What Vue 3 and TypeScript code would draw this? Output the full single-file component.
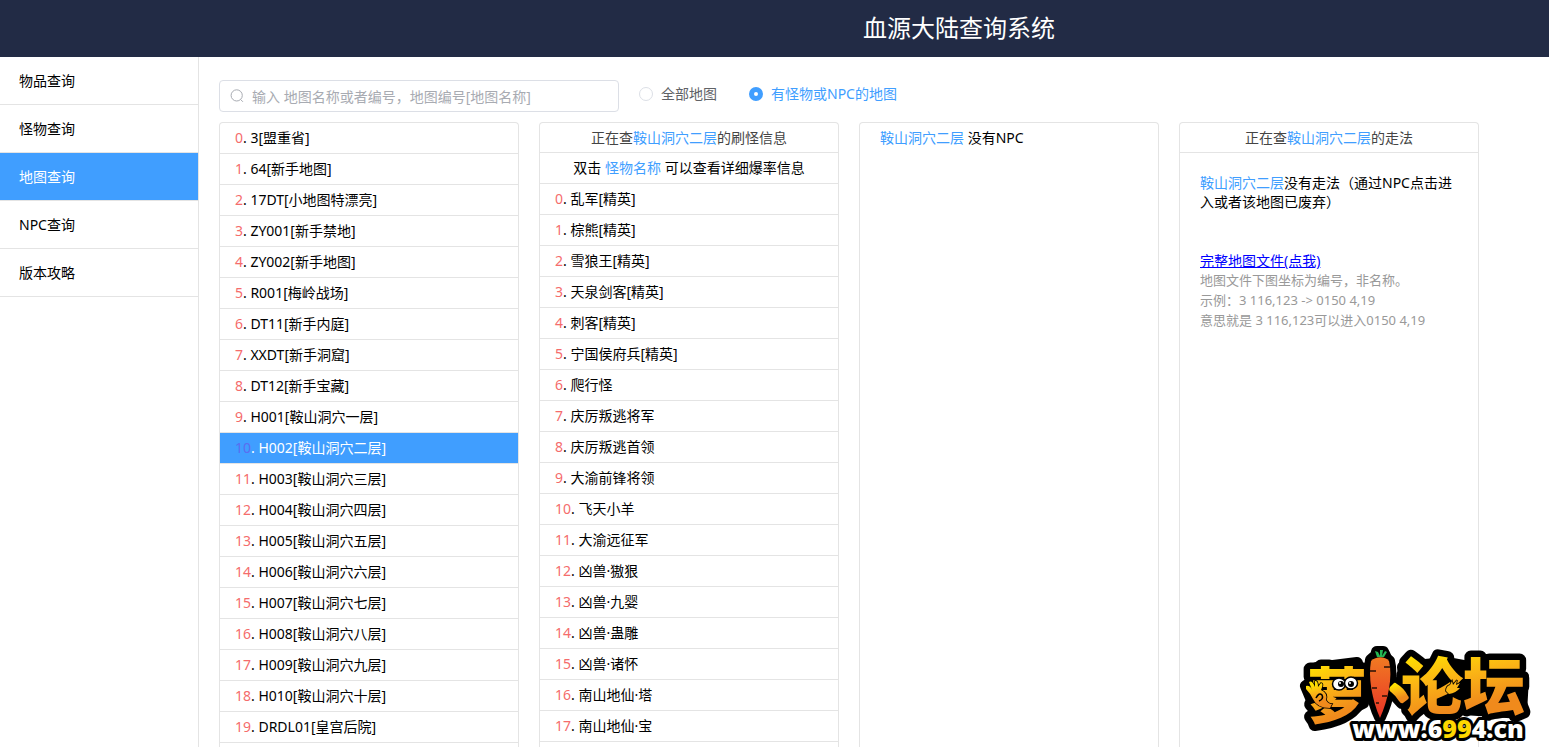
<script setup lang="ts">
import { ref } from 'vue'

const navItems: string[] = ['物品查询', '怪物查询', '地图查询', 'NPC查询', '版本攻略']
const activeNav = ref(2)

const maps: string[] = [
  '3[盟重省]', '64[新手地图]', '17DT[小地图特漂亮]', 'ZY001[新手禁地]', 'ZY002[新手地图]',
  'R001[梅岭战场]', 'DT11[新手内庭]', 'XXDT[新手洞窟]', 'DT12[新手宝藏]', 'H001[鞍山洞穴一层]',
  'H002[鞍山洞穴二层]', 'H003[鞍山洞穴三层]', 'H004[鞍山洞穴四层]', 'H005[鞍山洞穴五层]',
  'H006[鞍山洞穴六层]', 'H007[鞍山洞穴七层]', 'H008[鞍山洞穴八层]', 'H009[鞍山洞穴九层]',
  'H010[鞍山洞穴十层]', 'DRDL01[皇宫后院]',
]
const activeMap = ref(10)

const monsters: string[] = [
  '乱军[精英]', '棕熊[精英]', '雪狼王[精英]', '天泉剑客[精英]', '刺客[精英]', '宁国侯府兵[精英]',
  '爬行怪', '庆厉叛逃将军', '庆厉叛逃首领', '大渝前锋将领', '飞天小羊', '大渝远征军',
  '凶兽·獓狠', '凶兽·九婴', '凶兽·蛊雕', '凶兽·诸怀', '南山地仙·塔', '南山地仙·宝',
]

const keyword = ref('')
const scope = ref('used')
const mapName = '鞍山洞穴二层'
</script>

<template>
  <div class="page">
    <header class="topbar"><h1>血源大陆查询系统</h1></header>
    <div class="body">
      <nav class="sidebar">
        <a
          v-for="(item, i) in navItems"
          :key="item"
          href="#"
          :class="{ active: i === activeNav }"
          @click.prevent="activeNav = i"
        >{{ item }}</a>
      </nav>

      <main class="main">
        <div class="toolbar">
          <div class="search">
            <svg viewBox="0 0 14 14" width="14" height="14" aria-hidden="true">
              <circle cx="6.7" cy="6.4" r="5.6" />
              <path d="M10.7 10.6 12.9 12.8" />
            </svg>
            <input
              v-model="keyword"
              type="text"
              aria-label="搜索地图"
              placeholder="输入 地图名称或者编号，地图编号[地图名称]"
            >
          </div>
          <div class="radios">
            <label><input v-model="scope" type="radio" name="scope" value="all"><span>全部地图</span></label>
            <label><input v-model="scope" type="radio" name="scope" value="used"><span>有怪物或NPC的地图</span></label>
          </div>
        </div>

        <div class="columns">
          <section class="card">
            <ul>
              <li v-for="(m, i) in maps" :key="m">
                <button type="button" class="row" :class="{ selected: i === activeMap }" @click="activeMap = i"><span class="num">{{ i }}</span>. {{ m }}</button>
              </li>
            </ul>
          </section>

          <section class="card">
            <h2>正在查<em>{{ mapName }}</em>的刷怪信息</h2>
            <p class="hint">双击 <em>怪物名称</em> 可以查看详细爆率信息</p>
            <ul>
              <li v-for="(m, i) in monsters" :key="m">
                <button type="button" class="row"><span class="num">{{ i }}</span>. {{ m }}</button>
              </li>
            </ul>
          </section>

          <section class="card">
            <p class="npc"><em>{{ mapName }}</em> 没有NPC</p>
          </section>

          <section class="card">
            <h2>正在查<em>{{ mapName }}</em>的走法</h2>
            <div class="route">
              <p><em>{{ mapName }}</em>没有走法（通过NPC点击进入或者该地图已废弃）</p>
              <a href="#">完整地图文件(点我)</a>
              <div class="notes">
                <p>地图文件下图坐标为编号，非名称。</p>
                <p>示例：3 116,123 -&gt; 0150 4,19</p>
                <p>意思就是 3 116,123可以进入0150 4,19</p>
              </div>
            </div>
          </section>
        </div>
      </main>
    </div>

    <svg class="brand" viewBox="0 0 240 104" width="240" height="104" role="img" aria-label="萝卜论坛 www.6994.cn">
      <defs>
        <linearGradient id="gold" x1="0" y1="0" x2="0.3" y2="1">
          <stop offset="0.2" stop-color="#ffe100" />
          <stop offset="0.5" stop-color="#fbb615" />
          <stop offset="0.85" stop-color="#f08a1c" />
        </linearGradient>
        <linearGradient id="carrot" x1="0" y1="0" x2="0" y2="1">
          <stop offset="0" stop-color="#f07a22" />
          <stop offset="1" stop-color="#ea3328" />
        </linearGradient>
        <linearGradient id="domain" gradientUnits="userSpaceOnUse" x1="0" y1="0" x2="240" y2="0">
          <stop offset="0.6" stop-color="#fff" />
          <stop offset="0.6" stop-color="#ffd800" />
          <stop offset="0.72" stop-color="#ffd800" />
          <stop offset="0.72" stop-color="#fff" />
        </linearGradient>
      </defs>
      <!-- black backing -->
      <g class="backing">
        <path d="M74 17C79 12 87 12 92 18C96 34 91 57 83 74C75 57 71 34 74 17Z" />
        <path d="M79 13 80 9H86L88 13" />
        <path d="M96 39Q106 43 112 54L105 60Q99 53 92 47Z" />
        <path d="M9 43 14 55 24 62 32 62 26 47 15 39Z" />
        <path d="M20 25 60 20 66 60 30 78Z" />
        <path d="M106 24 150 20 226 34 224 70 110 62Z" />
      </g>
      <text class="glyph" x="10" y="75">萝</text>
      <text class="glyph wide" x="104" y="67">论坛</text>
      <g fill="url(#gold)">
        <path d="M97 40Q98 39 100 41Q107 45 111 53Q113 55 110 57L106 60Q104 61 102 58Q98 52 94 49Q91 47 93 44Z" />
      </g>
      <!-- waving hand -->
      <path
        d="M9 43Q13 42 15 47L12 39Q15 37 18 44L18 38Q21 37 21 44L24 40Q27 40 24 47Q31 50 29 57Q31 61 35 61L33 65Q20 65 16 56Q13 50 9 46Z"
        fill="url(#gold)" stroke="#000" stroke-width="1.6" paint-order="stroke"
      />
      <path d="M19 55Q22 49 25 52Q27 56 22 58" fill="none" stroke="#000" stroke-width="1.6" />
      <!-- carrot -->
      <path d="M74 18C79 13 88 13 92 18C96 34 91 57 83 75C75 57 71 34 74 18Z" fill="url(#carrot)" />
      <path d="M73 28H79M87 24H93M75 45H80M85 53H90M79 60H82" stroke="#2a1006" stroke-width="1.4" />
      <path d="M80 14 78 8 81 9 83 13 83 7 86 7 85 13 88 8 90 9 87 14Z" fill="#25b653" />
      <!-- eyes -->
      <g stroke="#000" stroke-width="1.5" fill="#fff">
        <ellipse cx="42" cy="41" rx="6.5" ry="6" />
        <ellipse cx="54" cy="40" rx="6.5" ry="6" />
      </g>
      <circle cx="44" cy="41" r="3" />
      <circle cx="54" cy="41" r="3" />
      <circle cx="43" cy="40" r="1" fill="#fff" />
      <circle cx="53" cy="40" r="1" fill="#fff" />
      <!-- small hand -->
      <path
        d="M149 48Q149 43 153 42L155 38L156 42L160 37L159 42L163 40L160 45L163 45Q159 50 152 51Z"
        fill="#fbb615" stroke="#000" stroke-width="1.6" paint-order="stroke"
      />
      <text class="domain" x="141" y="95" text-anchor="middle">www.6994.cn</text>
    </svg>
  </div>
</template>

<style>
body {
  margin: 0;
  background: #fff;
}
</style>

<style scoped>
.page {
  display: flex;
  flex-direction: column;
  height: 100vh;
  overflow: hidden;
  position: relative;
  color: #000;
  font: 14px/19px "Noto Sans", "Noto Sans CJK SC", sans-serif;
}
h1, h2, p, ul {
  margin: 0;
  padding: 0;
  font-weight: 400;
}
ul { list-style: none; }
em {
  font-style: normal;
  color: #409eff;
}
.topbar {
  flex: none;
  background: #222b45;
  padding: 0 0 2px 369px;
  text-align: center;
  color: #fff;
}
.topbar h1 {
  font-size: 24px;
  line-height: 55px;
}
.body {
  flex: 1;
  display: flex;
  min-height: 0;
}
.sidebar {
  flex: none;
  width: 198px;
  border-right: 1px solid #e4e4e4;
}
.sidebar a {
  display: block;
  padding-left: 19px;
  line-height: 47px;
  border-bottom: 1px solid #e4e4e4;
  color: #000;
  text-decoration: none;
}
.sidebar a.active {
  background: #409eff;
  color: #fff;
}
.main {
  flex: 1;
  min-width: 0;
  display: flex;
  flex-direction: column;
  padding: 23px 70px 0 20px;
}
.toolbar {
  flex: none;
  display: flex;
  gap: 20px;
  margin-bottom: 10px;
}
.search {
  box-sizing: border-box;
  width: 400px;
  height: 32px;
  display: flex;
  align-items: center;
  gap: 8px;
  padding: 0 10px;
  border: 1px solid #dcdfe6;
  border-radius: 4px;
}
.search svg {
  flex: none;
  fill: none;
  stroke: #a8abb2;
}
.search input {
  flex: 1;
  min-width: 0;
  border: 0;
  padding: 0;
  outline: 0;
  background: none;
  font: inherit;
}
.search input::placeholder { color: #a8abb2; }
.radios {
  display: flex;
  align-items: center;
  gap: 32px;
  height: 27px;
}
.radios label {
  display: flex;
  align-items: center;
  gap: 8px;
  color: #606266;
}
.radios input {
  appearance: none;
  box-sizing: border-box;
  width: 14px;
  height: 14px;
  margin: 0;
  border: 1px solid #dcdfe6;
  border-radius: 50%;
}
.radios input:checked { border: 5px solid #409eff; }
.radios input:checked + span { color: #409eff; }
.columns {
  flex: 1;
  min-height: 0;
  display: grid;
  grid-template-columns: repeat(4, minmax(0, 1fr));
  gap: 20px;
}
.card {
  border: 1px solid #e4e4e4;
  border-bottom: 0;
  border-radius: 4px 4px 0 0;
}
.card h2 {
  font-size: 14px;
  line-height: 29px;
  border-bottom: 1px solid #e4e4e4;
  text-align: center;
  color: #444;
}
.hint {
  line-height: 30px;
  border-bottom: 1px solid #e4e4e4;
  text-align: center;
}
.row {
  display: block;
  width: 100%;
  border: 0;
  border-bottom: 1px solid #e4e4e4;
  padding: 0 15px;
  background: none;
  color: inherit;
  font: inherit;
  line-height: 30px;
  text-align: left;
  cursor: pointer;
}
.num { color: #f56c6c; }
.row.selected {
  background: #409eff;
  color: #fff;
}
.row.selected .num { color: #5c6cf0; }
.npc {
  padding-left: 20px;
  line-height: 30px;
}
.route { padding: 20px; }
.route a {
  display: block;
  margin-top: 40px;
  color: #00f;
  text-decoration: underline;
}
.notes {
  font-size: 13px;
  line-height: 20px;
  color: #999;
}
.brand {
  position: absolute;
  right: 12px;
  bottom: 0;
}
.glyph {
  font: 900 60px "Noto Sans CJK SC", sans-serif;
  fill: url(#gold);
  stroke: #000;
  stroke-width: 13px;
  stroke-linejoin: round;
  paint-order: stroke;
}
.glyph.wide { font-size: 62px; }
.backing {
  fill: #000;
  stroke: #000;
  stroke-width: 12px;
  stroke-linejoin: round;
  stroke-linecap: round;
}
.domain {
  font: 800 25px "Open Sans", sans-serif;
  fill: url(#domain);
  stroke: #000;
  stroke-width: 6px;
  stroke-linejoin: round;
  paint-order: stroke;
}
</style>
